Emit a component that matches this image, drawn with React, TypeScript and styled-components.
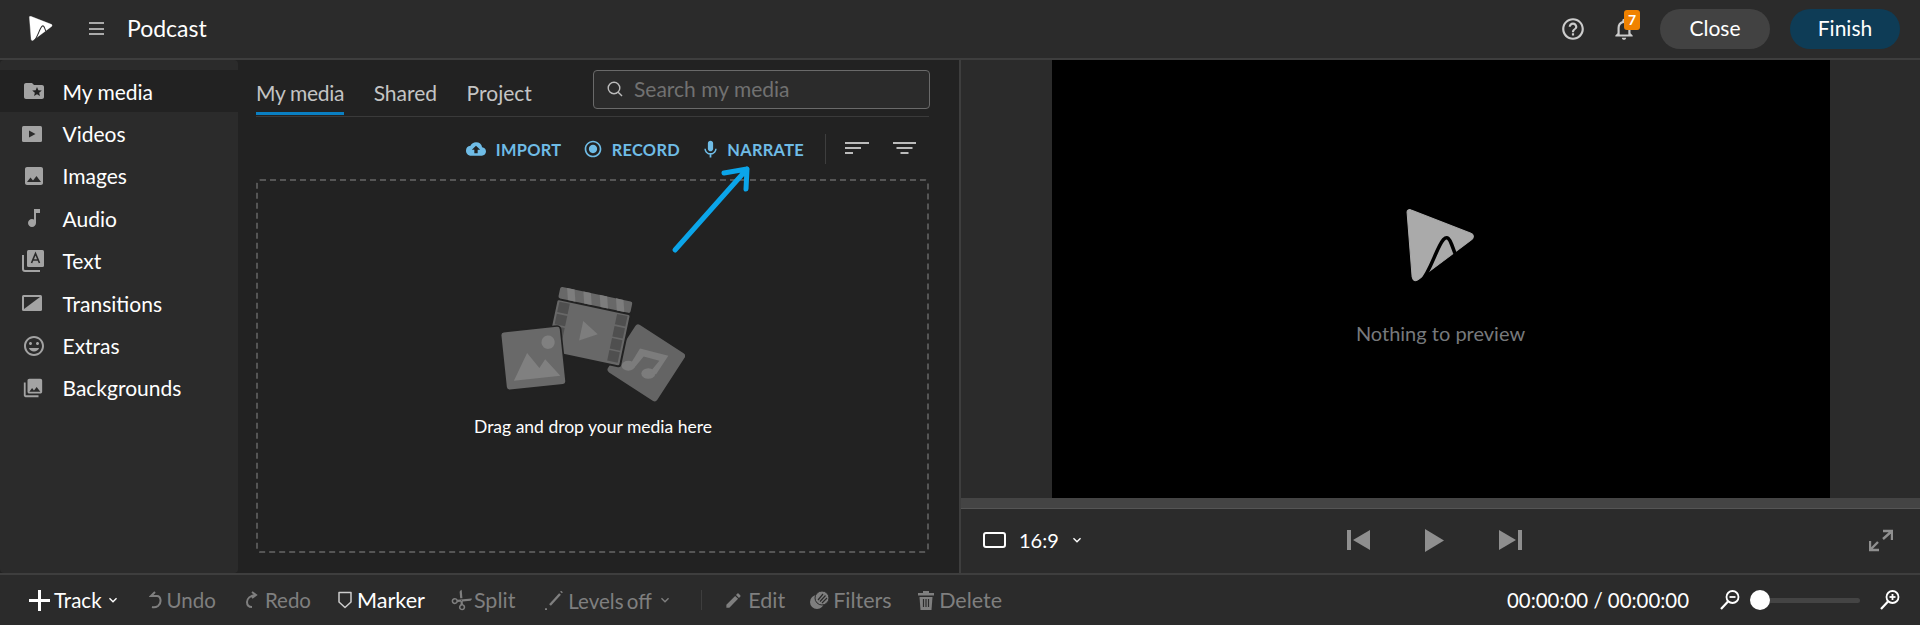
import React from "react";
import styled, { createGlobalStyle } from "styled-components";
import { MdFolderSpecial, MdMusicNote, MdPhotoLibrary, MdCloudUpload, MdRadioButtonChecked, MdMic, MdHelpOutline, MdNotificationsNone, MdEdit, MdContentCut, MdInsertEmoticon, MdImage, MdKeyboardArrowDown } from "react-icons/md";

const Global = createGlobalStyle`
  html, body { margin: 0; padding: 0; background: #2b2b2b; }
  #root { width: 1920px; height: 625px; overflow: hidden; }
  * { box-sizing: border-box; }
`;

const Page = styled.div`
  width: 1920px; height: 625px; position: relative; display: flex; flex-direction: column;
  background: #2b2b2b; color: #fff; font-family: Lato, "Open Sans", sans-serif;
`;
const Header = styled.header`
  height: 60px; flex: none; display: flex; align-items: center; border-bottom: 2px solid #3e3e3e; padding: 0 20px 1px 28px;
`;
const HeaderTitle = styled.div`font-size: 23px; margin-left: 23px; line-height: 1; margin-top: -1px;`;
const Burger = styled.div`
  width: 15px; height: 13px; margin-left: 36px; border-top: 2px solid #aaa; border-bottom: 2px solid #aaa; position: relative;
  &::after { content: ""; position: absolute; left: 0; right: 0; top: 3.5px; height: 2px; background: #aaa; }
`;
const Spacer = styled.div`flex: 1;`;
const HeaderIcon = styled.div`width: 26px; height: 26px; display: flex; align-items: center; justify-content: center; color: #ccc; position: relative; margin-left: ${p => p.$ml || 0}px;`;
const Badge = styled.span`
  position: absolute; left: 13px; top: -6px; width: 16px; height: 20px; background: #f08200; border-radius: 3px;
  color: #fff; font-size: 14px; font-weight: 700; text-align: center; line-height: 20px;
`;
const Pill = styled.button`
  width: 110px; height: 40px; border-radius: 20px; border: 0; color: #fff; font-family: inherit; font-size: 21px; margin-left: ${p => p.$ml}px; padding: 0 0 2px;
  background: ${p => p.$bg};
`;
const Main = styled.div`flex: 1; min-height: 0; display: flex; border-bottom: 2px solid #3e3e3e; background: #222;`;
const Sidebar = styled.nav`width: 238px; flex: none; padding-top: 10px; background: #2b2b2b; border-radius: 4px;`;
const NavRow = styled.div`
  height: 42.4px; display: flex; align-items: center; padding-left: ${p => p.$pl || 22}px; font-size: 21px; color: #fff; background: ${p => p.$active ? "#222" : "transparent"};
`;
const NavIconBox = styled.span`width: 40.5px; display: flex; align-items: center; color: #a3a3a3;`;
const Media = styled.section`width: 721px; flex: none; background: #222; padding: 0 30px 20px 18px; display: flex; flex-direction: column;`;
const TabsRow = styled.div`height: 57px; flex: none; display: flex; align-items: flex-end; border-bottom: 1px solid #3a3a3a; justify-content: space-between; position: relative;`;
const Tabs = styled.div`display: flex; gap: 29.5px; height: 100%; align-items: flex-end;`;
const Tab = styled.div`
  font-size: 21px; line-height: 24px; color: #c4c4c4; padding-bottom: 8px; height: 33px; margin-bottom: 2px; position: relative;
  ${p => p.$active && `letter-spacing: -.3px; &::after { content: ""; position: absolute; left: 0; right: 0; bottom: -1px; height: 3px; background: #0a7fc2; }`}
`;
const Search = styled.div`
  position: absolute; right: -1px; top: 10px; width: 337px; height: 39px; border: 1px solid #6a6a6a; border-radius: 4px; background: #2b2b2b;
  display: flex; align-items: center; padding: 0 0 2px 13px; color: #717171; font-size: 21px; gap: 11px;
`;
const Actions = styled.div`height: 62px; flex: none; display: flex; align-items: center; justify-content: flex-end; padding: 2px 12px 0 0;`;
const ActionBtn = styled.div`display: flex; align-items: center; color: #6fbce6; font-size: 16.4px; font-weight: 700; letter-spacing: .3px; gap: ${p => p.$gap}px; margin-right: ${p => p.$mr ?? 25}px;`;
const VRule = styled.div`width: 1px; height: ${p => p.$h}px; background: #3e3e3e; margin: 0 ${p => p.$mr || 0}px 0 ${p => p.$ml || 0}px;`;
const SortBtn = styled.div`display: flex; align-items: center; margin-left: ${p => p.$ml}px;`;
const Drop = styled.div`
  flex: 1; border-radius: 4px; display: flex; flex-direction: column; align-items: center; padding-top: 104px;
  border: 2px dashed #555;
`;
const DropText = styled.div`font-size: 17.5px; color: #fff; margin-top: 14px; margin-left: 1px;`;
const Preview = styled.section`flex: 1; display: flex; flex-direction: column; border-left: 2px solid #3e3e3e; min-width: 0; background: #2b2b2b;`;
const Stage = styled.div`height: 438px; flex: none; display: flex; justify-content: center;`;
const Screen = styled.div`width: 778px; margin-left: 1px; background: #000; display: flex; flex-direction: column; align-items: center; padding-top: 149px;`;
const PreviewLogo = styled.div`margin-left: -3px; display: flex;`;
const Nothing = styled.div`font-size: 20px; color: #77797c; margin-top: 39px; margin-left: -1px;`;
const Band = styled.div`height: 11px; flex: none; background: #444; border-bottom: 1px solid #555;`;
const Controls = styled.div`flex: 1; display: grid; grid-template-columns: 1fr auto 1fr; align-items: center; padding: 0 27px 2px 22px;`;
const Aspect = styled.div`display: flex; align-items: center; font-size: 20px; color: #fff;`;
const AspectLabel = styled.span`margin-left: 13px;`;
const Transport = styled.div`display: flex; align-items: center; gap: 54px; margin-left: -6.5px;`;
const ExpandWrap = styled.div`justify-self: end; display: flex;`;
const Footer = styled.footer`height: 50px; flex: none; display: flex; align-items: center; padding: 0 20px 0 29px;`;
const Tool = styled.div`
  display: flex; align-items: center; font-size: ${p => p.$fs ?? 20.5}px; color: ${p => p.$on ? "#fff" : "#7f7f7f"}; gap: ${p => p.$gap ?? 5}px; margin-left: ${p => p.$ml || 0}px;
`;
const LevelsLabel = styled.span`font-size: 20.5px; word-spacing: -2px; margin-top: 2px;`;
const MarkerLabel = styled.span`font-size: 21.6px;`;
const Chevron = styled(MdKeyboardArrowDown)`margin-left: ${p => p.$ml ?? 6}px;`;
const Time = styled.div`font-size: 20.4px; color: #fff; margin-right: 31px;`;
const ZoomRow = styled.div`display: flex; align-items: center;`;
const ZoomGap = styled.span`width: 20px;`;
const Track = styled.div`width: 100px; height: 5px; border-radius: 3px; background: #444; margin-right: 20px; position: relative;`;
const Knob = styled.div`position: absolute; left: -10px; top: -8px; width: 20px; height: 20px; border-radius: 50%; background: #fff;`;
const Scissors = styled(MdContentCut)`transform: rotate(-50deg);`;
const Overlay = styled.svg`position: absolute; left: 0; top: 0; pointer-events: none;`;

const Logo = ({ size, fill, line, w = 3 }: any) => (
  <svg width={size * 1.0} height={size} viewBox="0 0 70 72" fill="none">
    <path d="M3 3 C3 1 5 0 7 1 L66 24 C69 25 69 28 67 30 L15 69 C11 72 9 71 8 67 Z" fill={fill} stroke={fill} strokeWidth="1" strokeLinejoin="round" />
    <path d="M17 71 C26 62 32 38 39 30 C43 26 45 30 47 35 L50 43" stroke={line} strokeWidth={w} strokeLinecap="round" />
  </svg>
);

const Slideshow = () => (
  <svg width="20" height="16" viewBox="0 0 20 16"><rect width="20" height="16" rx="1.5" fill="currentColor" /><path d="M7 4.5 L13.5 8 L7 11.5Z" fill="#2b2b2b" /></svg>
);
const TextIcon = () => (
  <svg width="22" height="22" viewBox="0 0 22 22" fill="none">
    <path d="M1 5 V19 Q1 21 3 21 H18" stroke="currentColor" strokeWidth="2" />
    <rect x="5" y="0" width="17" height="17" rx="1.5" fill="currentColor" />
    <path d="M9.5 13 L13.5 3.5 L17.5 13 M11 10 H16" stroke="#2b2b2b" strokeWidth="1.6" />
  </svg>
);
const TransIcon = () => (
  <svg width="20" height="16" viewBox="0 0 20 16"><rect width="20" height="16" rx="1.5" fill="currentColor" /><path d="M2 14 L2 2 L18 2Z" fill="#2b2b2b" /></svg>
);
const Crop = () => <svg width="23" height="16" viewBox="0 0 23 16" fill="none"><rect x="1" y="1" width="21" height="14" rx="2" stroke="#fff" strokeWidth="2" /></svg>;
const Sort = () => <svg width="27" height="14" viewBox="0 0 27 14" fill="#bbb"><rect width="24" height="2" y="0" /><rect width="16" height="2" y="5" /><rect width="8" height="2" y="10" /></svg>;
const Filter = () => <svg width="24" height="14" viewBox="0 0 24 14" fill="#bbb"><rect width="23" height="2" y="0" /><rect x="3.5" width="16" height="2" y="5" /><rect x="7.5" width="8" height="2" y="10" /></svg>;
const Prev = ({ flip }: any) => (
  <svg width="24" height="20" viewBox="0 0 24 20" fill="#8f8f8f" style={flip ? { transform: "scaleX(-1)" } : undefined}><rect width="4" height="20" x="0" /><path d="M23 0 V20 L6 10Z" /></svg>
);
const Play = () => <svg width="19" height="23" viewBox="0 0 19 23" fill="#8f8f8f"><path d="M0 0 L19 11.5 L0 23Z" /></svg>;
const Expand = () => (
  <svg width="24" height="23" viewBox="0 0 24 23" fill="none" stroke="#8f8f8f" strokeWidth="2.4"><path d="M14 2 H23 V11 M23 2 L14 10" /><path d="M1 12 V21 H10 M1 21 L9 13" /></svg>
);
const Undo = () => <svg width="13" height="18" viewBox="0 0 13 18" fill="none" stroke="currentColor" strokeWidth="2"><path d="M6 1 L2 5 H8 C12 5 13 12 9 15 Q6 17 3 16" /></svg>;
const Redo = () => <svg width="12" height="18" viewBox="0 0 12 18" fill="none" stroke="currentColor" strokeWidth="2"><path d="M6 1 L10 4 L6 7 M10 4 C4 4 1 8 1 11 C1 14 3 16 6 16" /></svg>;
const Marker = () => <svg width="14" height="18" viewBox="0 0 14 18" fill="none" stroke="#ccc" strokeWidth="1.5"><path d="M1 1.5 H13 V11 L7 16.5 L1 11Z" strokeLinejoin="round" /></svg>;
const Levels = () => <svg width="19" height="19" viewBox="0 0 19 19" fill="none" stroke="currentColor" strokeWidth="2.4"><path d="M6 14 L16 3" /><path d="M1 18.5 h2" /><path d="M17 1.5 L18 .5" /></svg>;
const Filters = () => (
  <svg width="19" height="18" viewBox="0 0 19 18"><circle cx="7" cy="11" r="7" fill="currentColor" /><circle cx="12" cy="7" r="7" fill="currentColor" stroke="#2b2b2b" strokeWidth="1" /><path d="M8 9 L13 3 M10 10.5 L15.5 4.5 M12 12 L17 7" stroke="#2b2b2b" strokeWidth="1.2" /></svg>
);
const Trash = () => (
  <svg width="16" height="19" viewBox="0 0 16 19" fill="currentColor"><path d="M5 0 H11 V2 H16 V4.5 H0 V2 H5Z" /><path d="M1.5 6 H14.5 L13.5 19 H2.5Z" /><path d="M5.5 8 V16 M8 8 V16 M10.5 8 V16" stroke="#2b2b2b" strokeWidth="1.2" /></svg>
);
const ZoomIcon = ({ plus }: any) => (
  <svg width="20" height="20" viewBox="0 0 20 20" fill="none" stroke="#fff" strokeWidth="1.8">
    <circle cx="12.5" cy="7" r="6" /><path d="M8 11.5 L1 19" strokeWidth="2.2" /><path d="M9.5 7 H15.5" />{plus && <path d="M12.5 4 V10" />}
  </svg>
);
const MediaArt = () => (
  <svg width="184" height="117" viewBox="90 50 552 350">
    <rect x="438" y="198" width="176" height="170" rx="10" fill="#646464" transform="rotate(33 526 283)" />
    <g fill="#7c7c7c">
      <ellipse cx="472" cy="292" rx="20" ry="15" />
      <ellipse cx="532" cy="315" rx="21" ry="16" />
      <path d="M507 240 L592 262 L555 318 L538 310 L565 277 L518 264 L490 298 L476 290Z" />
    </g>
    <g transform="rotate(12 356.5 172.5)">
      <rect x="240" y="108" width="233" height="168" rx="8" fill="#222" />
      <rect x="246" y="75" width="221" height="35" rx="6" fill="#686868" />
      <g fill="#7d7d7d"><path d="M266 75 H289 L299 110 H276Z" /><path d="M316 75 H339 L349 110 H326Z" /><path d="M366 75 H389 L399 110 H376Z" /><path d="M416 75 H439 L449 110 H426Z" /></g>
      <rect x="246" y="116" width="221" height="154" rx="4" fill="#686868" />
      <g fill="#4f4f4f">
        <rect x="252" y="120" width="32" height="32" /><rect x="252" y="157" width="32" height="32" /><rect x="252" y="194" width="32" height="32" /><rect x="252" y="231" width="32" height="32" />
        <rect x="429" y="120" width="32" height="32" /><rect x="429" y="157" width="32" height="32" /><rect x="429" y="194" width="32" height="32" /><rect x="429" y="231" width="32" height="32" />
      </g>
      <path d="M334 162 L385 192 L334 222Z" fill="#7d7d7d" />
    </g>
    <g transform="rotate(-6 187 269)">
      <rect x="99" y="183" width="176" height="172" rx="8" fill="#696969" stroke="#222" strokeWidth="10" paintOrder="stroke" />
      <circle cx="236" cy="226" r="20" fill="#808080" />
      <path d="M122 330 L170 252 L202 300 L222 276 L262 330Z" fill="#808080" />
    </g>
  </svg>
);

const nav: [string, React.ReactNode, boolean?][] = [
  ["My media", <MdFolderSpecial size={24} />, true],
  ["Videos", <Slideshow />],
  ["Images", <MdImage size={24} />],
  ["Audio", <MdMusicNote size={24} />],
  ["Text", <TextIcon />],
  ["Transitions", <TransIcon />],
  ["Extras", <MdInsertEmoticon size={24} />],
  ["Backgrounds", <MdPhotoLibrary size={22} />],
];

export default function App() {
  return (
    <Page>
      <Global />
      <Header>
        <Logo size={25} fill="#fff" line="#2b2b2b" w={3} />
        <Burger />
        <HeaderTitle>Podcast</HeaderTitle>
        <Spacer />
        <HeaderIcon><MdHelpOutline size={26} /></HeaderIcon>
        <HeaderIcon $ml={25}><MdNotificationsNone size={26} /><Badge>7</Badge></HeaderIcon>
        <Pill $bg="#424242" $ml={23}>Close</Pill>
        <Pill $bg="#0e3c56" $ml={20}>Finish</Pill>
      </Header>
      <Main>
        <Sidebar>
          {nav.map(([label, icon, active]) => (
            <NavRow key={label} $active={active}><NavIconBox>{icon}</NavIconBox>{label}</NavRow>
          ))}
        </Sidebar>
        <Media>
          <TabsRow>
            <Tabs>
              <Tab $active>My media</Tab>
              <Tab>Shared</Tab>
              <Tab>Project</Tab>
            </Tabs>
            <Search>
              <svg width="16" height="16" viewBox="0 0 16 16" fill="none" stroke="#bbb" strokeWidth="1.4"><circle cx="7" cy="7" r="5.8" /><path d="M11.2 11.2 L15 15" /></svg>
              Search my media
            </Search>
          </TabsRow>
          <Actions>
            <ActionBtn $gap={10} $mr={21.3}><MdCloudUpload size={20} />IMPORT</ActionBtn>
            <ActionBtn $gap={9} $mr={20.3}><MdRadioButtonChecked size={20} />RECORD</ActionBtn>
            <ActionBtn $gap={6} $mr={25}><MdMic size={21} />NARRATE</ActionBtn>
            <VRule $h={30} $ml={-4} />
            <SortBtn $ml={19}><Sort /></SortBtn>
            <SortBtn $ml={21}><Filter /></SortBtn>
          </Actions>
          <Drop>
            <MediaArt />
            <DropText>Drag and drop your media here</DropText>
          </Drop>
        </Media>
        <Preview>
          <Stage>
            <Screen>
              <PreviewLogo><Logo size={73} fill="#aaa" line="#000" w={3.5} /></PreviewLogo>
              <Nothing>Nothing to preview</Nothing>
            </Screen>
          </Stage>
          <Band />
          <Controls>
            <Aspect><Crop /><AspectLabel>16:9</AspectLabel><Chevron size={16} $ml={10} /></Aspect>
            <Transport><Prev /><Play /><Prev flip /></Transport>
            <ExpandWrap><Expand /></ExpandWrap>
          </Controls>
        </Preview>
      </Main>
      <Footer>
        <Tool $on $gap={4}>
          <svg width="21" height="21" viewBox="0 0 21 21" fill="#fff"><rect x="9" width="3" height="21" /><rect y="9" width="21" height="3" /></svg>
          Track<Chevron size={16} $ml={-1} />
        </Tool>
        <Tool $ml={28}><Undo />Undo</Tool>
        <Tool $ml={30} $gap={7}><Redo />Redo</Tool>
        <Tool $on $ml={27}><Marker /><MarkerLabel>Marker</MarkerLabel></Tool>
        <Tool $ml={27} $gap={3} $fs={21.5}><Scissors size={19} />Split</Tool>
        <Tool $ml={29}><Levels /><LevelsLabel>Levels off</LevelsLabel><Chevron size={16} $ml={0} /></Tool>
        <VRule $h={20} $ml={28.5} $mr={22} />
        <Tool $fs={21.5}><MdEdit size={19} />Edit</Tool>
        <Tool $ml={25} $gap={4} $fs={21.5}><Filters />Filters</Tool>
        <Tool $ml={26.5} $fs={21.5}><Trash />Delete</Tool>
        <Spacer />
        <Time>00:00:00 / 00:00:00</Time>
        <ZoomRow>
          <ZoomIcon />
          <ZoomGap />
          <Track><Knob /></Track>
          <ZoomIcon plus />
        </ZoomRow>
      </Footer>
      <Overlay width="1920" height="625" viewBox="0 0 1920 625" fill="none">
        <path d="M675 250 L747 169 M724 173 L747 169 L746 189" stroke="#0ba5e9" strokeWidth="5" strokeLinecap="round" strokeLinejoin="round" />
      </Overlay>
    </Page>
  );
}
